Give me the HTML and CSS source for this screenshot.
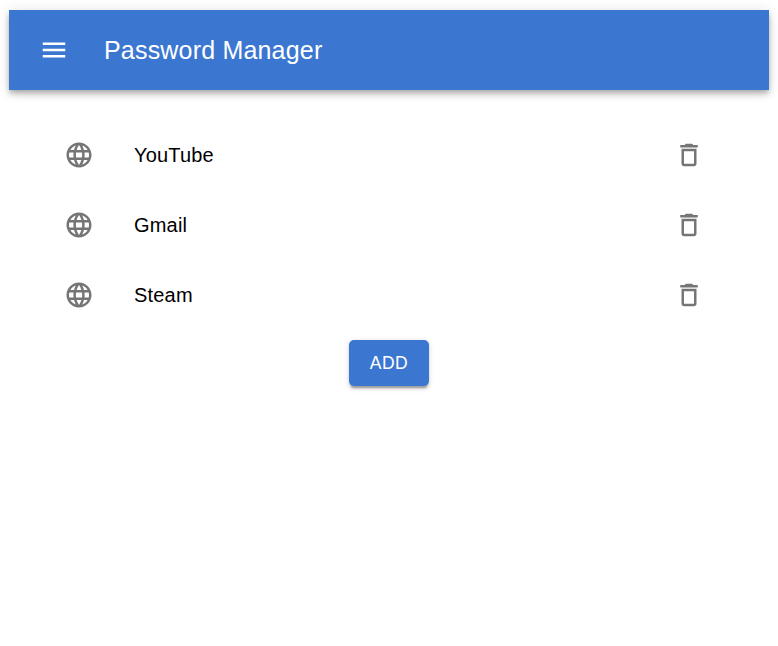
FILE: index.html
```html
<!DOCTYPE html>
<html lang="en">
<head>
<meta charset="utf-8">
<title>Password Manager</title>
<link rel="stylesheet" href="styles.css">
</head>
<body>
<svg width="0" height="0" class="sprite">
<symbol id="globe" viewBox="0 0 24 24"><path d="M11.99 2C6.47 2 2 6.48 2 12s4.47 10 9.99 10C17.52 22 22 17.52 22 12S17.52 2 11.99 2zm6.93 6h-2.95c-.32-1.25-.78-2.45-1.38-3.56 1.84.63 3.37 1.91 4.33 3.56zM12 4.04c.83 1.2 1.48 2.53 1.91 3.96h-3.82c.43-1.43 1.08-2.76 1.91-3.96zM4.26 14C4.1 13.36 4 12.69 4 12s.1-1.36.26-2h3.38c-.08.66-.14 1.32-.14 2s.06 1.34.14 2H4.26zm.82 2h2.95c.32 1.25.78 2.45 1.38 3.56-1.84-.63-3.37-1.9-4.33-3.56zm2.95-8H5.08c.96-1.66 2.49-2.93 4.33-3.56C8.81 5.55 8.35 6.75 8.03 8zM12 19.96c-.83-1.2-1.48-2.53-1.91-3.96h3.82c-.43 1.43-1.08 2.76-1.91 3.96zM14.34 14H9.66c-.09-.66-.16-1.32-.16-2s.07-1.35.16-2h4.68c.09.65.16 1.32.16 2s-.07 1.34-.16 2zm.25 5.56c.6-1.11 1.06-2.31 1.38-3.56h2.95c-.96 1.65-2.49 2.93-4.33 3.56zM16.36 14c.08-.66.14-1.32.14-2s-.06-1.34-.14-2h3.38c.16.64.26 1.31.26 2s-.1 1.36-.26 2h-3.38z"/></symbol>
<symbol id="trash" viewBox="0 0 24 24"><path d="M6 19c0 1.1.9 2 2 2h8c1.1 0 2-.9 2-2V7H6v12zM8 9h8v10H8V9zm7.5-5l-1-1h-5l-1 1H5v2h14V4h-3.5z"/></symbol>
</svg>
<header class="bar">
<button class="menu" aria-label="menu"><svg class="icon" viewBox="0 0 24 24"><path d="M3 18h18v-2H3v2zm0-5h18v-2H3v2zm0-7v2h18V6H3z"/></svg></button>
<h1 class="title">Password Manager</h1>
</header>
<ul class="list">
<li class="row"><svg class="icon"><use href="#globe"/></svg><span class="name">YouTube</span><svg class="icon"><use href="#trash"/></svg></li>
<li class="row"><svg class="icon"><use href="#globe"/></svg><span class="name">Gmail</span><svg class="icon"><use href="#trash"/></svg></li>
<li class="row"><svg class="icon"><use href="#globe"/></svg><span class="name">Steam</span><svg class="icon"><use href="#trash"/></svg></li>
</ul>
<button class="add">ADD</button>
</body>
</html>
```
FILE: styles.css
```css
* { box-sizing: border-box; }
body {
  margin: 0;
  padding: 10px 9px;
  background: #fff;
  font-family: "Liberation Sans", Arial, sans-serif;
}
.sprite { display: none; }
.icon { width: 30px; height: 30px; fill: currentColor; display: block; flex: none; }
.bar {
  display: flex;
  align-items: center;
  height: 80px;
  padding: 0 30px;
  background: #3b77d1;
  color: #fff;
  box-shadow: 0 2.5px 5px -1px rgba(0,0,0,.2), 0 5px 6.25px rgba(0,0,0,.14), 0 1.25px 12.5px rgba(0,0,0,.12);
}
.menu { padding: 0; border: 0; background: none; color: inherit; margin-right: 35px; }
.title { margin: 0; font-size: 25px; font-weight: 400; letter-spacing: .19px; }
.list { list-style: none; margin: 30px 0 0; padding: 0 65px 0 55px; }
.row { display: flex; align-items: center; height: 70px; color: #757575; }
.name { flex: 1; margin-left: 40px; color: #000; font-size: 20px; letter-spacing: .19px; }
.add {
  display: block;
  width: 80px;
  height: 46px;
  margin: 10px auto 0;
  padding: 0;
  border: 0;
  border-radius: 5px;
  background: #3b77d1;
  color: #fff;
  font: 400 17.5px "Liberation Sans", Arial, sans-serif;
  letter-spacing: .5px;
  box-shadow: 0 3.75px 1.25px -2.5px rgba(0,0,0,.2), 0 2.5px 2.5px rgba(0,0,0,.14), 0 1.25px 6.25px rgba(0,0,0,.12);
}
```
